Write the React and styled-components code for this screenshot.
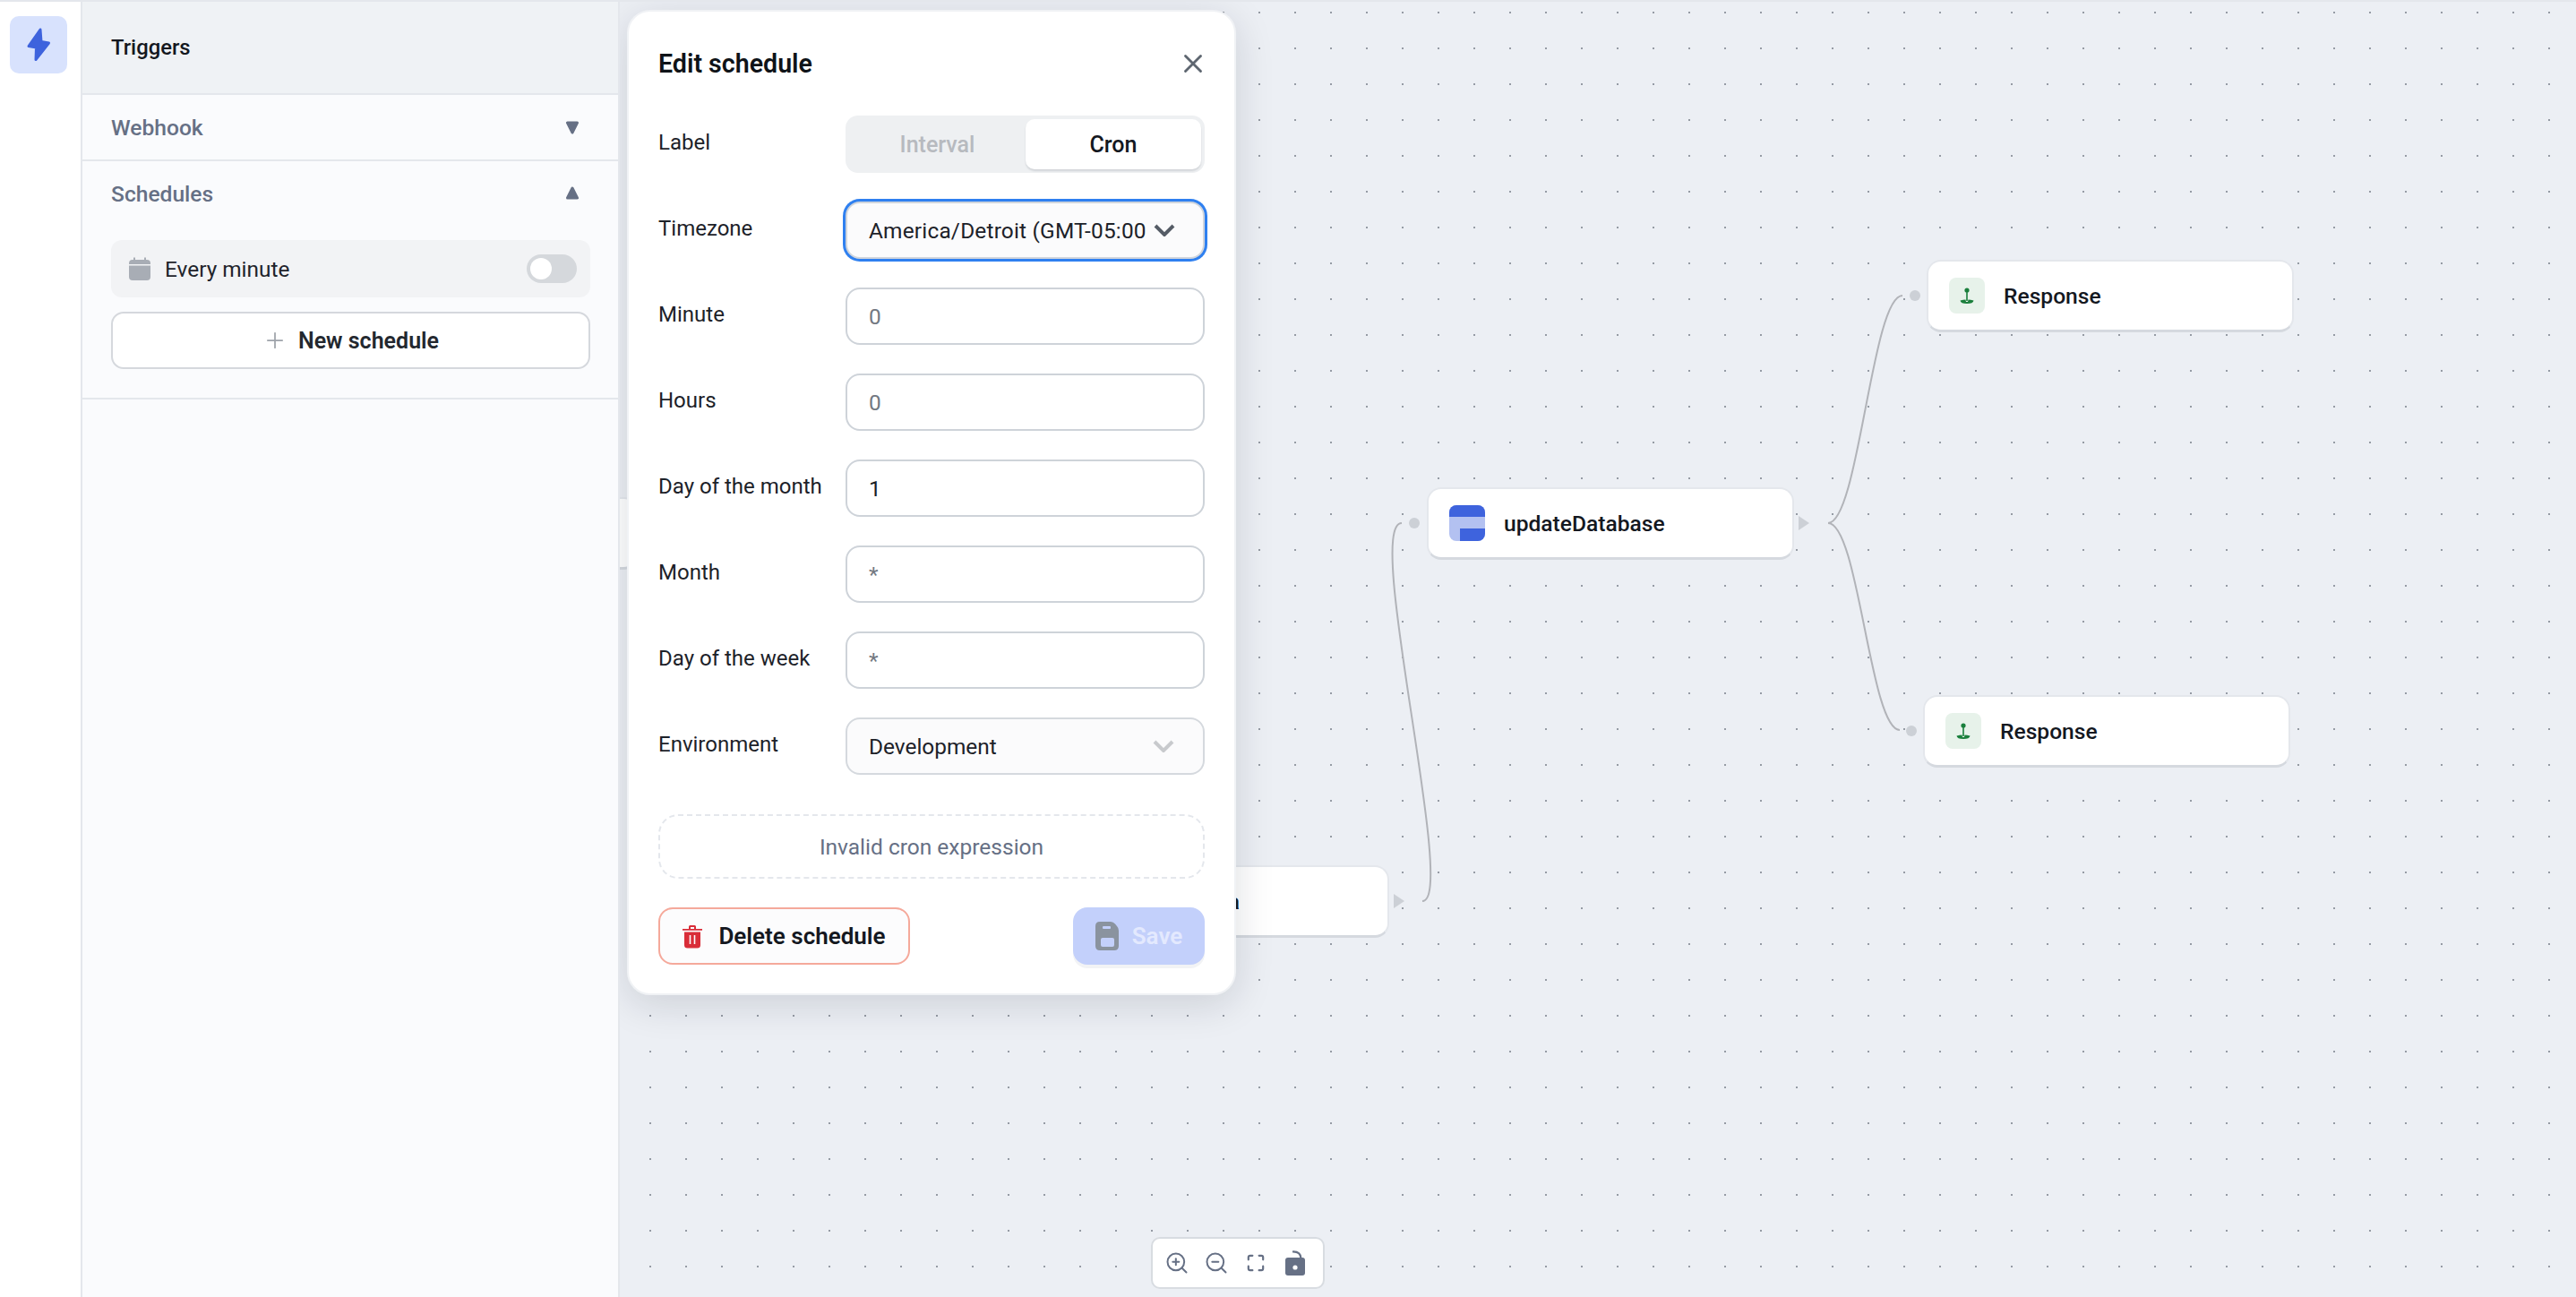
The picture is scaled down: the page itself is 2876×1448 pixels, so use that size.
import React from 'react';
import styled, { createGlobalStyle } from 'styled-components';
import { X, Plus, ZoomIn, ZoomOut } from 'lucide-react';

const FONT = '"Roboto", "Liberation Sans", sans-serif';

const Global = createGlobalStyle`
  html, body { margin: 0; padding: 0; height: 100%; overflow: hidden; }
  body { font-family: ${FONT}; color: #1a1f26; background: #eceff4; }
  * { box-sizing: border-box; }
`;

const Page = styled.div`
  display: flex;
  width: 2876px;
  height: 1448px;
  border-top: 2px solid #e4e7ec;
`;

const Rail = styled.nav`
  flex: 0 0 92px;
  padding: 16px 0 0 11px;
  background: #fff;
  border-right: 2px solid #e4e7ec;
`;

const RailButton = styled.div`
  width: 64px;
  height: 64px;
  border-radius: 10px;
  background: #d8e2fd;
  display: flex;
  align-items: center;
  justify-content: center;
`;

const Panel = styled.aside`
  flex: 0 0 600px;
  background: #fafbfd;
  border-right: 2px solid #e4e7ec;
  display: flex;
  flex-direction: column;
`;

const PanelHeader = styled.header`
  height: 104px;
  padding: 0 32px;
  display: flex;
  align-items: center;
  background: #eff2f5;
  border-bottom: 2px solid #e4e7ec;
  font-size: 23.800px;
  font-weight: 500;
  color: #14181f;
`;

const SectionHead = styled.div`
  height: 72px;
  padding: 0 43px 0 32px;
  display: flex;
  align-items: center;
  justify-content: space-between;
  font-size: 24.600px;
  font-weight: 500;
  color: #667085;
`;

const Section = styled.section`
  border-bottom: 2px solid #e4e7ec;
`;

const SectionBody = styled.div`
  padding: 16px 31px 32px 32px;
  display: flex;
  flex-direction: column;
  gap: 16px;
`;

const ScheduleRow = styled.div`
  height: 64px;
  padding: 0 15px 0 20px;
  border-radius: 12px;
  background: #f2f3f5;
  display: flex;
  align-items: center;
  gap: 16px;
  font-size: 24.400px;
  color: #1f242b;
`;

const ScheduleName = styled.span`
  flex: 1;
`;

const Toggle = styled.div`
  width: 56px;
  height: 32px;
  border-radius: 16px;
  background: #d5d8dc;
  padding: 4px;
`;

const Knob = styled.div`
  width: 24px;
  height: 24px;
  border-radius: 50%;
  background: #fff;
`;

const NewButton = styled.button`
  height: 64px;
  border: 2px solid #d5d8dd;
  border-radius: 14px;
  background: #fff;
  display: flex;
  align-items: center;
  justify-content: center;
  gap: 12px;
  font: 600 25px ${FONT};
  color: #23282f;
`;

const Canvas = styled.main`
  position: relative;
  flex: 1;
  overflow: hidden;
  background-color: #eceff4;
  background-image: radial-gradient(circle at 34px 12px, #959ba4 0, #959ba4 0.9px, transparent 1.5px);
  background-size: 40px 40px;
`;

const Edges = styled.svg`
  position: absolute;
  inset: 0;
  width: 100%;
  height: 100%;
`;

const Node = styled.div`
  position: absolute;
  left: ${p => p.$x - 692}px;
  top: ${p => p.$y - 3}px;
  width: ${p => p.$w || 410}px;
  height: 81px;
  padding: 0 23px;
  display: flex;
  align-items: center;
  gap: 21px;
  background: #fff;
  border-radius: 16px;
  border: 2px solid #e4e7ec;
  border-bottom: 3px solid #d5d9df;
  font-size: 24.600px;
  font-weight: 500;
  color: #14181f;
`;

const NodeIcon = styled.svg`
  flex: none;
  width: 40px;
  height: 40px;
  border-radius: 8px;
`;

const Port = styled.div`
  position: absolute;
  left: ${p => p.$x - 692 - 6}px;
  top: ${p => p.$y - 2 - 6}px;
  width: 12px;
  height: 12px;
  border-radius: 50%;
  background: #ccd0d6;
`;

const Arrow = styled.div`
  position: absolute;
  left: ${p => p.$x - 692}px;
  top: ${p => p.$y - 2 - 8}px;
  width: 0;
  height: 0;
  border-left: 12px solid #ccd0d6;
  border-top: 8px solid transparent;
  border-bottom: 8px solid transparent;
`;

const Controls = styled.div`
  position: absolute;
  left: ${1285 - 692}px;
  bottom: 9px;
  width: 194px;
  height: 58px;
  border: 2px solid #d8dce1;
  border-radius: 10px;
  background: #fff;
  display: grid;
  grid-template-columns: repeat(4, 44px);
  align-items: center;
  justify-items: center;
  padding-left: 5px;
  color: #667085;
`;

const Modal = styled.div`
  position: absolute;
  left: 8px;
  top: 9px;
  width: 680px;
  height: 1100px;
  padding: 31px 33px;
  background: #fff;
  border: 2px solid #f0f2f5;
  border-radius: 26px;
  box-shadow: 0 10px 44px rgba(16, 24, 40, 0.14);
  display: flex;
  flex-direction: column;
`;

const ModalHead = styled.div`
  display: flex;
  align-items: center;
  justify-content: space-between;
  height: 54px;
  margin-bottom: 31px;
`;

const ModalTitle = styled.h2`
  margin: 0;
  font-size: 28.600px;
  font-weight: 600;
  color: #0f1318;
`;

const CloseIcon = styled(X)`
  margin-right: -4px;
  color: #5e6670;
`;

const Form = styled.div`
  display: flex;
  flex-direction: column;
  gap: 32px;
`;

const Row = styled.div`
  display: grid;
  grid-template-columns: 209px 401px;
  height: 64px;
  align-items: center;
`;

const Label = styled.label`
  font-size: 24px;
  color: #1d2229;
  margin-top: -4px;
`;

const Segments = styled.div`
  height: 64px;
  padding: 4px;
  border-radius: 14px;
  background: #eef0f2;
  display: grid;
  grid-template-columns: 1fr 196px;
`;

const Segment = styled.div`
  display: flex;
  align-items: center;
  justify-content: center;
  border-radius: 10px;
  font-size: 25px;
  font-weight: 500;
  color: ${p => (p.$active ? '#14181f' : '#b7babf')};
  background: ${p => (p.$active ? '#fff' : 'transparent')};
  box-shadow: ${p => (p.$active ? '0 2px 2px rgba(16,24,40,.12)' : 'none')};
`;

const Input = styled.input`
  width: 100%;
  height: 64px;
  padding: 0 24px;
  border: 2px solid #ced3d9;
  border-radius: 16px;
  background: #fff;
  font: 400 24.400px ${FONT};
  color: #1a1f26;
  outline: none;
  &::placeholder { color: #737982; opacity: 1; }
`;

const Select = styled.div`
  height: 64px;
  padding: 0 32px 0 24px;
  border: 2px solid ${p => (p.$focus ? '#d0d5dc' : '#d5d9de')};
  border-radius: 16px;
  background: #fbfbfc;
  display: flex;
  align-items: center;
  gap: 8px;
  font-size: 24.400px;
  letter-spacing: ${p => (p.$focus ? '0.2px' : '0')};
  color: #1d2229;
  box-shadow: ${p => (p.$focus ? '0 0 0 3px #2f80f0' : 'none')};
`;

const SelectText = styled.span`
  flex: 1;
  white-space: nowrap;
`;

const Notice = styled.div`
  margin-top: 44px;
  height: 72px;
  border: 2px dashed #e4e7ec;
  border-radius: 22px;
  display: flex;
  align-items: center;
  justify-content: center;
  font-size: 24.500px;
  color: #667085;
`;

const Footer = styled.div`
  margin-top: 32px;
  display: flex;
  justify-content: space-between;
`;

const DeleteButton = styled.button`
  width: 281px;
  height: 64px;
  border: 2px solid #f5a99b;
  border-radius: 16px;
  background: #fcfcfd;
  display: flex;
  align-items: center;
  justify-content: center;
  gap: 18px;
  font: 600 26px ${FONT};
  color: #14181f;
`;

const SaveButton = styled.button`
  width: 147px;
  height: 64px;
  border: none;
  border-radius: 16px;
  background: #c3d0fb;
  box-shadow: 0 4px 0 #f2f3f5;
  display: flex;
  align-items: center;
  justify-content: center;
  gap: 15px;
  font: 600 26px ${FONT};
  color: #e3e9fe;
`;

const Bolt = () => (
  <svg width="64" height="64" viewBox="0 0 64 64">
    <path d="M34 15 L21 33.500 L29.500 35 L29 48.500 L43.500 30 L35 28.500 Z" fill="#3e63dd" stroke="#3e63dd" strokeWidth="3" strokeLinejoin="round" />
  </svg>
);

const Tri = ({ up }) => (
  <svg width="16" height="16" viewBox="0 0 16 16">
    <path d={up ? 'M8 2 L13.500 13 H2.500 Z' : 'M2.500 3 H13.500 L8 14 Z'} fill="#667085" stroke="#667085" strokeWidth="3" strokeLinejoin="round" />
  </svg>
);

const Calendar = () => (
  <svg width="24" height="26" viewBox="0 0 24 26" style={{ flex: 'none' }}>
    <path d="M6 0.500 V5 M18 0.500 V5" stroke="#a8adb5" strokeWidth="2" />
    <rect x="0" y="3" width="24" height="23" rx="4" fill="#a8adb5" />
    <rect x="0" y="8" width="24" height="1.500" fill="#f2f3f5" />
  </svg>
);

const Chevron = ({ color }) => (
  <svg width="24" height="14" viewBox="0 0 24 14" style={{ flex: 'none' }}>
    <path d="M2 2 L12 12 L22 2" fill="none" stroke={color} strokeWidth="4" />
  </svg>
);

const Trash = () => (
  <svg width="22" height="27" viewBox="0 0 22 27" style={{ flex: 'none' }}>
    <path d="M0 5 H22 V6.800 H0 Z M7 5 V2.500 Q7 1 8.500 1 H13.500 Q15 1 15 2.500 V5 H13 V3 H9 V5 Z" fill="#d92d38" />
    <path d="M2 8.500 H20 V23 Q20 26.500 16.500 26.500 H5.500 Q2 26.500 2 23 Z" fill="#d92d38" />
    <path d="M8.500 12 V22 M13.500 12 V22" stroke="#fcfcfd" strokeWidth="1.600" />
  </svg>
);

const Floppy = () => (
  <svg width="26" height="34" viewBox="0 0 26 34" style={{ flex: 'none' }}>
    <path d="M0 6 Q0 1 5 1 H17 Q20 1 22 3.500 L24 6 Q26 8 26 11 V28 Q26 33 21 33 H5 Q0 33 0 28 Z" fill="#8a939f" />
    <rect x="8" y="6" width="9" height="3" rx="1" fill="#c3d0fb" />
    <rect x="6" y="19" width="15" height="10" rx="2" fill="#c3d0fb" />
  </svg>
);

const Pin = () => (
  <NodeIcon viewBox="0 0 40 40">
    <rect width="40" height="40" fill="#e7f2ea" />
    <path d="M20 15 V26" stroke="#1a7f3c" strokeWidth="1.600" />
    <circle cx="20" cy="14" r="2.600" fill="#1a7f3c" />
    <path d="M12.500 25.500 Q16 24.500 18.500 24.500 L19 27 H21 L21.500 24.500 Q24 24.500 27.500 25.500 Q27 29 20 29 Q13 29 12.500 25.500 Z" fill="#1a7f3c" />
  </NodeIcon>
);

const Database = () => (
  <NodeIcon viewBox="0 0 40 40">
    <rect width="40" height="40" fill="#b3c1f1" />
    <rect width="40" height="13" fill="#3e63dd" />
    <rect x="12" y="26" width="28" height="14" fill="#3e63dd" />
  </NodeIcon>
);

const Frame = () => (
  <svg width="20" height="20" viewBox="0 0 22 22" fill="none" stroke="currentColor" strokeWidth="2.400" strokeLinecap="round">
    <path d="M2 7 V4 Q2 2 4 2 H7 M15 2 H18 Q20 2 20 4 V7 M20 15 V18 Q20 20 18 20 H15 M7 20 H4 Q2 20 2 18 V15" />
  </svg>
);

const OpenLock = () => (
  <svg width="24" height="30" viewBox="0 0 24 30">
    <path d="M9 2.500 Q18 2 18.500 10" fill="none" stroke="#667085" strokeWidth="2.200" />
    <rect x="1" y="9" width="22" height="20" rx="3" fill="#667085" />
    <circle cx="12" cy="20" r="2.600" fill="#fff" />
  </svg>
);

const rows = [
  { label: 'Minute', placeholder: '0' },
  { label: 'Hours', placeholder: '0' },
  { label: 'Day of the month', value: '1' },
  { label: 'Month', placeholder: '*' },
  { label: 'Day of the week', placeholder: '*' },
];

export default function App() {
  return (
    <>
      <Global />
      <Page>
        <Rail>
          <RailButton><Bolt /></RailButton>
        </Rail>
        <Panel>
          <PanelHeader>Triggers</PanelHeader>
          <Section>
            <SectionHead>Webhook<Tri /></SectionHead>
          </Section>
          <Section>
            <SectionHead>Schedules<Tri up /></SectionHead>
            <SectionBody>
              <ScheduleRow>
                <Calendar />
                <ScheduleName>Every minute</ScheduleName>
                <Toggle><Knob /></Toggle>
              </ScheduleRow>
              <NewButton>
                <Plus size={28} strokeWidth={1.500} color="#9ea3aa" />
                New schedule
              </NewButton>
            </SectionBody>
          </Section>
        </Panel>
        <Canvas>
          <Edges viewBox="692 2 2184 1446" fill="none" stroke="#b1b3b8" strokeWidth="2">
            <path d="M2041 584 C2075 584 2090 330 2124 330" />
            <path d="M2041 584 C2075 584 2088 815 2121 815" />
            <path d="M1588 1006 C1628 1006 1522 584 1565 584" />
          </Edges>

          <Node $x={292} $y={556} $w={420} />

          <Node $x={1151} $y={967} $w={400}>
            <Pin />
            Get user data
          </Node>
          <Arrow $x={1556} $y={1006} />

          <Port $x={1579} $y={584} />
          <Node $x={1593} $y={545}>
            <Database />
            updateDatabase
          </Node>
          <Arrow $x={2008} $y={584} />

          <Port $x={2138} $y={330} />
          <Node $x={2151} $y={291}>
            <Pin />
            Response
          </Node>

          <Port $x={2134} $y={816} />
          <Node $x={2147} $y={777}>
            <Pin />
            Response
          </Node>

          <Controls>
            <ZoomIn size={28} strokeWidth={1.700} />
            <ZoomOut size={28} strokeWidth={1.700} />
            <Frame />
            <OpenLock />
          </Controls>

          <Modal>
            <ModalHead>
              <ModalTitle>Edit schedule</ModalTitle>
              <CloseIcon size={34} strokeWidth={2} />
            </ModalHead>
            <Form>
              <Row>
                <Label>Label</Label>
                <Segments>
                  <Segment>Interval</Segment>
                  <Segment $active>Cron</Segment>
                </Segments>
              </Row>
              <Row>
                <Label>Timezone</Label>
                <Select $focus>
                  <SelectText>America/Detroit (GMT-05:00</SelectText>
                  <Chevron color="#555c66" />
                </Select>
              </Row>
              {rows.map(r => (
                <Row key={r.label}>
                  <Label>{r.label}</Label>
                  <Input readOnly placeholder={r.placeholder} defaultValue={r.value} />
                </Row>
              ))}
              <Row>
                <Label>Environment</Label>
                <Select>
                  <SelectText>Development</SelectText>
                  <Chevron color="#c8cacd" />
                </Select>
              </Row>
            </Form>
            <Notice>Invalid cron expression</Notice>
            <Footer>
              <DeleteButton><Trash />Delete schedule</DeleteButton>
              <SaveButton><Floppy />Save</SaveButton>
            </Footer>
          </Modal>
        </Canvas>
      </Page>
    </>
  );
}
